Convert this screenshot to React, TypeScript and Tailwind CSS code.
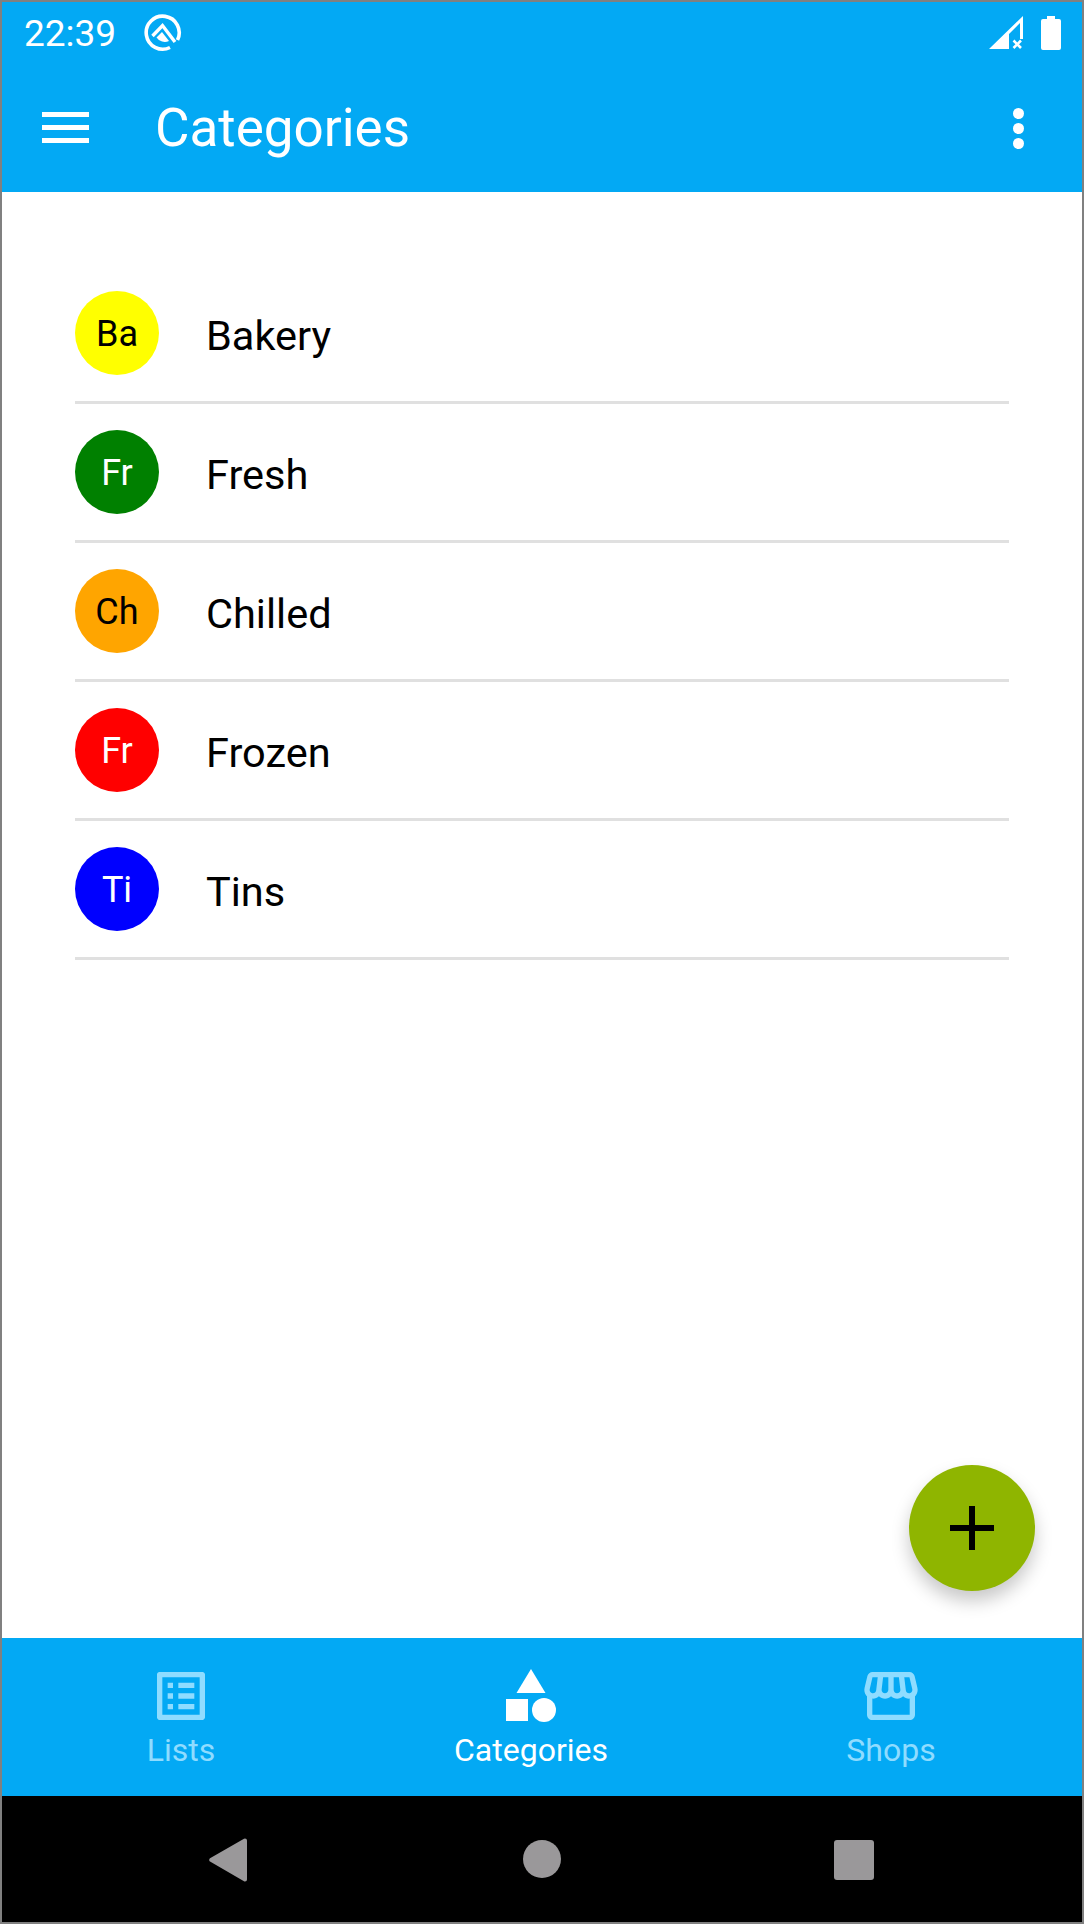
const categories = [
  { initials: 'Ba', name: 'Bakery', circle: 'bg-[#ffff00] text-black' },
  { initials: 'Fr', name: 'Fresh', circle: 'bg-[#008000] text-white' },
  { initials: 'Ch', name: 'Chilled', circle: 'bg-[#ffa500] text-black' },
  { initials: 'Fr', name: 'Frozen', circle: 'bg-[#ff0000] text-white' },
  { initials: 'Ti', name: 'Tins', circle: 'bg-[#0000ff] text-white' },
];

function NavItem({ label, active, children }: { label: string; active?: boolean; children: React.ReactNode }) {
  return (
    <div className={`flex flex-col items-center pt-[26px] ${active ? 'text-white' : 'text-[#8fdcff]'}`}>
      <div className="flex h-[64px] w-[64px] items-center justify-center">{children}</div>
      <span className="mt-[4px] text-[32px] leading-[36px]">{label}</span>
    </div>
  );
}

export default function App() {
  return (
    <div className="flex h-[1924px] w-[1084px] flex-col border-2 border-[#808080] bg-white font-['Roboto',sans-serif]">
      {/* Status bar and toolbar */}
      <header className="h-[190px] shrink-0 bg-[#03a9f4] text-white">
        <div className="flex h-[62px] items-center justify-between pl-[22px] pr-[21px]">
          <div className="flex items-center gap-[29px]">
            <span className="text-[37px] leading-none">22:39</span>
            <svg width="38" height="38" viewBox="0 0 38 38" fill="none" stroke="currentColor" className="-ml-[1px]">
              <path d="M26 33.500A16.500 16.500 0 1 1 33.500 26" strokeWidth="3.600" />
              <path d="M8.500 22L18.500 11.500L31 28" strokeWidth="3.400" />
              <path d="M12.500 23.500L18 18L25 27A10 10 0 0 1 12.500 23.500z" fill="currentColor" stroke="none" />
            </svg>
          </div>
          <div className="flex items-center gap-[18px]">
            <svg width="34" height="34" viewBox="0 0 34 34" fill="currentColor" stroke="none">
              <path d="M34 0V23H31V7L20 18V33H0Z" />
              <path d="M24.500 24.500l7.500 7.500M32 24.500l-7.500 7.500" stroke="currentColor" strokeWidth="2.600" fill="none" />
            </svg>
            <svg width="20" height="34" viewBox="0 0 20 34" fill="currentColor">
              <path d="M6 0h8v3h4a2 2 0 0 1 2 2v27a2 2 0 0 1-2 2H2a2 2 0 0 1-2-2V5a2 2 0 0 1 2-2h4z" />
            </svg>
          </div>
        </div>
        <div className="flex h-[128px] items-center justify-between pl-[40px] pr-[58px]">
          <div className="flex items-center">
            <svg width="47" height="32" viewBox="0 0 47 32" fill="currentColor">
              <rect y="0" width="47" height="5" />
              <rect y="13" width="47" height="5" />
              <rect y="26" width="47" height="5" />
            </svg>
            <h1 className="ml-[66px] text-[53px] leading-none">Categories</h1>
          </div>
          <div className="flex flex-col gap-[4px]">
            <span className="h-[11px] w-[11px] rounded-full bg-white" />
            <span className="h-[11px] w-[11px] rounded-full bg-white" />
            <span className="h-[11px] w-[11px] rounded-full bg-white" />
          </div>
        </div>
      </header>

      {/* Category list */}
      <main className="relative flex-1 px-[73px] pt-[73px]">
        {categories.map((c) => (
          <div key={c.name} className="flex h-[139px] items-center border-b-[3px] border-[#e0e0e0]">
            <div className={`flex h-[84px] w-[84px] items-center justify-center rounded-full pt-[2px] text-[36px] ${c.circle}`}>
              {c.initials}
            </div>
            <span className="ml-[47px] pt-[5px] text-[41.5px] leading-none text-black">{c.name}</span>
          </div>
        ))}
        <button className="absolute bottom-[47px] right-[47px] flex h-[126px] w-[126px] items-center justify-center rounded-full bg-[#8fb500] shadow-[0_10px_18px_rgba(0,0,0,0.22)]">
          <svg width="44" height="44" viewBox="0 0 44 44" fill="black">
            <rect y="19" width="44" height="6" />
            <rect x="19" width="6" height="44" />
          </svg>
        </button>
      </main>

      {/* Bottom tabs */}
      <nav className="grid h-[158px] shrink-0 grid-cols-[358px_342px_378px] bg-[#03a9f4]">
        <NavItem label="Lists">
          <svg width="64" height="64" viewBox="0 0 24 24" fill="currentColor">
            <path d="M19 5v14H5V5h14m1.1-2H3.9c-.5 0-.9.4-.9.9v16.2c0 .4.4.9.9.9h16.2c.4 0 .9-.5.9-.9V3.9c0-.5-.5-.9-.9-.9zM11 7h6v2h-6V7zm0 4h6v2h-6v-2zm0 4h6v2h-6zM7 7h2v2H7zm0 4h2v2H7zm0 4h2v2H7z" />
          </svg>
        </NavItem>
        <NavItem label="Categories" active>
          <svg width="64" height="64" viewBox="0 0 64 64" fill="currentColor">
            <path d="M32 5l14.500 24h-29z" />
            <rect x="7" y="35" width="22" height="22" />
            <circle cx="45" cy="46" r="12" />
          </svg>
        </NavItem>
        <NavItem label="Shops">
          <svg width="64" height="64" viewBox="0 0 24 24" fill="currentColor">
            <path d="M21.9 8.89l-1.05-4.37c-.22-.9-1-1.52-1.91-1.52H5.05c-.9 0-1.69.63-1.9 1.52L2.1 8.89c-.24 1.02-.02 2.06.62 2.88.08.11.19.19.28.29V19c0 1.1.9 2 2 2h14c1.1 0 2-.9 2-2v-6.94c.09-.09.2-.18.28-.28.64-.82.87-1.87.62-2.89zm-2.99-3.9l1.05 4.37c.1.42.01.84-.25 1.17-.14.18-.44.47-.94.47-.61 0-1.14-.49-1.21-1.14L16.98 5l1.93-.01zM13 5h1.96l.54 4.52c.05.39-.07.78-.33 1.07-.22.26-.54.41-.95.41-.67 0-1.22-.59-1.22-1.31V5zM8.49 9.52L9.04 5H11v4.69c0 .72-.55 1.31-1.29 1.31-.34 0-.65-.15-.89-.41-.25-.29-.37-.68-.33-1.07zm-4.45-.16L5.05 5h1.97l-.58 4.86c-.08.65-.6 1.14-1.21 1.14-.49 0-.8-.29-.93-.47-.27-.32-.36-.75-.26-1.17zM5 19v-6.03c.08.01.15.03.23.03.87 0 1.66-.36 2.24-.95.6.6 1.4.95 2.31.95.87 0 1.65-.36 2.23-.93.59.57 1.39.93 2.29.93.84 0 1.64-.35 2.24-.95.58.59 1.37.95 2.24.95.08 0 .15-.02.23-.03V19H5z" />
          </svg>
        </NavItem>
      </nav>

      {/* Android navigation bar */}
      <div className="flex h-[126px] shrink-0 items-start bg-black pl-[207px] pt-[42px]">
        <svg width="38" height="44" viewBox="0 0 38 44" fill="#9a989a">
          <path d="M36 0.500a2 2 0 0 1 2 2v39a2 2 0 0 1-2 2 2 2 0 0 1-1-.3L1 23.500a2 2 0 0 1 0-3.200L35 .8a2 2 0 0 1 1-.3z" />
        </svg>
        <div className="ml-[276px] mt-[2px] h-[38px] w-[38px] rounded-full bg-[#9a989a]" />
        <div className="ml-[273px] mt-[2px] h-[40px] w-[40px] rounded-[3px] bg-[#9a989a]" />
      </div>
    </div>
  );
}
